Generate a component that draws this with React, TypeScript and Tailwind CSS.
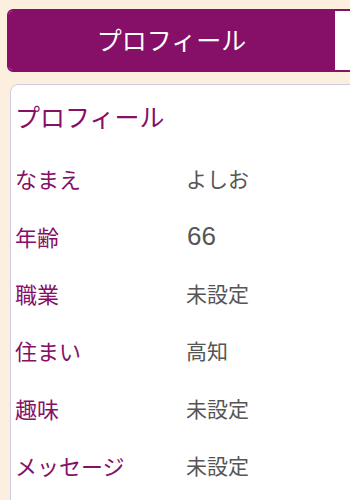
const rows: [string, string][] = [
  ['なまえ', 'よしお'],
  ['年齢', '66'],
  ['職業', '未設定'],
  ['住まい', '高知'],
  ['趣味', '未設定'],
  ['メッセージ', '未設定'],
]

const font = { fontFamily: '"Noto Sans CJK JP", "Noto Sans", sans-serif' }

export default function App() {
  return (
    <div
      className="w-[350px] h-[500px] overflow-hidden bg-[#fdefdf]"
      style={font}
    >
      <div className="ml-[7px] pt-[9px] w-[700px]">
        <div className="flex h-[63px] rounded-[6px] border-2 border-[#860f67] bg-white overflow-hidden">
          <div className="w-[325px] shrink-0 bg-[#860f67] flex items-center justify-center text-white text-[25px] pb-[2px]">
            プロフィール
          </div>
          <div className="flex-1 bg-white border-l border-[#860f67]" />
        </div>
      </div>
      <div className="ml-[10px] mt-[12px] w-[700px] h-[500px] bg-white border border-[#cdcde2] rounded-tl-[8px] pl-[4px]">
        <div className="pt-[15px] text-[25px] leading-[32px] text-[#860f67]">
          プロフィール
        </div>
        <div className="mt-[18px]">
          {rows.map(([label, value]) => (
            <div key={label} className="flex items-center h-[57.4px]">
              <div className="w-[171px] text-[22px] text-[#860f67]">{label}</div>
              {/^\d+$/.test(value) ? (
                <div
                  className="text-[26px] text-[#555555] pl-[1px]"
                  style={{ fontFamily: '"Liberation Sans", Arial, sans-serif' }}
                >
                  {value}
                </div>
              ) : (
                <div className="text-[21px] text-[#555555]">{value}</div>
              )}
            </div>
          ))}
        </div>
      </div>
    </div>
  )
}
